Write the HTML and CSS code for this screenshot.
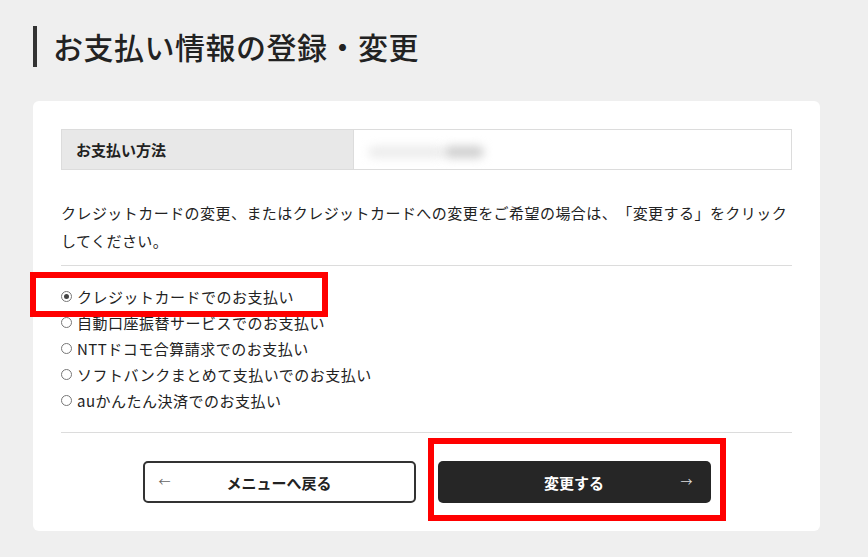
FILE: index.html
```html
<!DOCTYPE html>
<html lang="ja">
<head>
  <meta charset="UTF-8">
  <title>お支払い情報の登録・変更</title>
  <link rel="stylesheet" href="styles.css">
</head>
<body>

<div class="page">
  <h1 class="page-title">お支払い情報の登録・変更</h1>

  <div class="card">
    <table class="info-table">
      <tr>
        <th>お支払い方法</th>
        <td><span class="blur blur-a"></span><span class="blur blur-b"></span></td>
      </tr>
    </table>

    <p class="note">クレジットカードの変更、またはクレジットカードへの変更をご希望の場合は、「変更する」をクリックしてください。</p>

    <hr class="line">

    <ul class="pay-list">
      <li><span class="radio checked"></span>クレジットカードでのお支払い</li>
      <li><span class="radio"></span>自動口座振替サービスでのお支払い</li>
      <li><span class="radio"></span>NTTドコモ合算請求でのお支払い</li>
      <li><span class="radio"></span>ソフトバンクまとめて支払いでのお支払い</li>
      <li><span class="radio"></span>auかんたん決済でのお支払い</li>
    </ul>

    <hr class="line line-bottom">

    <div class="buttons">
      <button class="btn btn-back"><span class="arrow arrow-left">&larr;</span>メニューへ戻る</button>
      <button class="btn btn-change">変更する<span class="arrow arrow-right">&rarr;</span></button>
    </div>

    <!-- 注釈の赤枠 -->
    <div class="mark mark-radio"></div>
    <div class="mark mark-button"></div>
  </div>
</div>

</body>
</html>
```

FILE: styles.css
```css
body {
  margin: 0;
  background-color: #efefef;
  color: #222;
  font-family: "Noto Sans CJK JP", "Noto Sans", sans-serif;
}

.page {
  width: 787px;
  padding: 26px 0 26px 33px;
}

.page-title {
  margin: 0 0 34px;
  padding-left: 16px;
  border-left: 4px solid #333;
  height: 41px;
  line-height: 41px;
  font-size: 30px;
  font-weight: 500;
  letter-spacing: 0.5px;
}

.card {
  position: relative;
  background-color: #fff;
  border-radius: 6px;
  padding: 28px 28px 28px;
}

.info-table {
  width: 100%;
  border-collapse: collapse;
}

.info-table th,
.info-table td {
  border: 1px solid #dcdcdc;
  height: 39px;
  padding: 0 14px;
  font-size: 15px;
}

.info-table th {
  width: 263px;
  background-color: #e8e8e8;
  text-align: left;
  font-weight: bold;
}

.blur {
  display: inline-block;
  vertical-align: middle;
  height: 12px;
  border-radius: 6px;
  filter: blur(5px);
}

.blur-a {
  width: 76px;
  background-color: #ececec;
}

.blur-b {
  width: 40px;
  margin-left: 0;
  background-color: #cfcfcf;
}

.note {
  margin: 29px 0 10px;
  font-size: 15px;
  line-height: 28px;
  letter-spacing: 0.45px;
  text-spacing-trim: space-all;
}

.line {
  margin: 0;
  border: none;
  border-top: 1px solid #dcdcdc;
}

.line-bottom {
  margin-top: 19px;
}

.pay-list {
  list-style: none;
  margin: 17px 0 0;
  padding: 0;
}

.pay-list li {
  display: flex;
  align-items: center;
  height: 26px;
  font-size: 15px;
  letter-spacing: 0.5px;
}

.radio {
  box-sizing: border-box;
  width: 11px;
  height: 11px;
  margin-right: 5px;
  border: 1px solid #777;
  border-radius: 50%;
  position: relative;
}

.radio.checked::after {
  content: "";
  position: absolute;
  left: 2px;
  top: 2px;
  width: 5px;
  height: 5px;
  border-radius: 50%;
  background-color: #444;
}

.buttons {
  display: flex;
  justify-content: center;
  gap: 22px;
  margin-top: 28px;
}

.btn {
  position: relative;
  width: 273px;
  height: 42px;
  border-radius: 5px;
  font-family: inherit;
  font-size: 15px;
  font-weight: bold;
  cursor: pointer;
}

.btn-back {
  background-color: #fff;
  color: #222;
  border: 2px solid #333;
}

.btn-change {
  background-color: #262626;
  color: #fff;
  border: none;
}

.arrow {
  position: absolute;
  top: 50%;
  transform: translateY(-55%);
  font-size: 12px;
  font-weight: normal;
}

.arrow-left {
  left: 14px;
  color: #666;
}

.arrow-right {
  right: 18px;
  color: #ddd;
}

.mark {
  position: absolute;
  border: 6px solid #ff0000;
  box-sizing: border-box;
}

.mark-radio {
  left: -3px;
  top: 171px;
  width: 298px;
  height: 45px;
}

.mark-button {
  left: 395px;
  top: 337px;
  width: 298px;
  height: 83px;
}
```
